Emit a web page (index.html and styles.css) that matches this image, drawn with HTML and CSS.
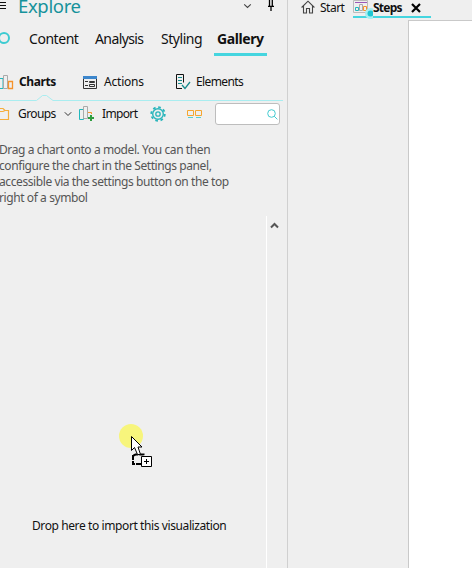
FILE: index.html
```html
<!DOCTYPE html>
<html lang="en">
<head>
<meta charset="utf-8">
<title>Explore</title>
<link rel="stylesheet" href="styles.css">
</head>
<body>
<div class="app">
  <aside class="panel">
    <header class="head">
      <svg class="menu" width="6" height="12" viewBox="0 0 6 12"><path d="M0 2.500h6M0 5.500h6M0 8.500h6" stroke="#111" fill="none"/></svg>
      <h1 class="title">Explore</h1>
      <svg class="head-chev" width="9" height="12" viewBox="0 0 9 12"><path d="M1.200 4.300l3.300 3.200 3.300-3.200" stroke="#444" stroke-width="1.100" fill="none"/></svg>
      <svg class="pin" width="8" height="12" viewBox="0 0 8 12"><path d="M2.500 0v6M5.300 0v6M1 6.300h6M4 6v5" stroke="#000" stroke-width="1.300" fill="none"/></svg>
    </header>
    <nav class="tabs">
      <svg class="ring" width="10" height="14" viewBox="0 0 10 14"><circle cx="4" cy="7" r="5" fill="none" stroke="#3dcbd1" stroke-width="2"/></svg>
      <a class="tab content">Content</a>
      <a class="tab analysis">Analysis</a>
      <a class="tab styling">Styling</a>
      <a class="tab gallery">Gallery</a>
    </nav>
    <nav class="subtabs">
      <svg class="i-charts" width="14" height="16" viewBox="0 0 14 16" fill="none"><path d="M-1 4.500h4v10h-4z" stroke="#22b8bd"/><path d="M3.500 1.500h4v13h-4z" stroke="#aaa"/><path d="M8.500 7.500h4v7h-4z" stroke="#f5932b" stroke-width="1.300"/></svg>
      <a class="sub charts">Charts</a>
      <svg class="i-actions" width="14" height="13" viewBox="0 0 14 13" fill="none"><path d="M.5.500h13v12H.5z" stroke="#333"/><path d="M0 0h14v3H0z" fill="#3d87cc"/><path d="M2 5.500h3M2 9.500h3M6.500 5.500h5v1h-5zM6.500 8.500h5v2h-5z" stroke="#333"/></svg>
      <a class="sub actions">Actions</a>
      <svg class="i-elements" width="15" height="16" viewBox="0 0 15 16" fill="none"><path d="M6 14.500H.5V.5h7v8" stroke="#111"/><path d="M2 3.500h4M2 6.500h4M2 9.500h4" stroke="#168a8c"/><path d="M6 11l3 3.500L14 8" stroke="#168a8c" stroke-width="1.300"/></svg>
      <a class="sub elements">Elements</a>
    </nav>
    <svg class="divider" width="287" height="8" viewBox="0 0 287 8"><path d="M0 6.500h36.500L42.500 1.500h4L53 6.500h230" stroke="#a9edf0" fill="none"/></svg>
    <div class="toolbar">
      <svg class="i-folder" width="10" height="14" viewBox="0 0 10 14"><path d="M-1 1.500h4l2 2h3.500v9H-1M0 4.500h3l2-1" stroke="#f5ae3c" stroke-width="1.200" fill="none"/></svg>
      <span class="tool groups">Groups</span>
      <svg class="g-chev" width="8" height="8" viewBox="0 0 8 8"><path d="M.8 2.300L4 5.500l3.200-3.200" stroke="#333" fill="none"/></svg>
      <svg class="i-import" width="16" height="16" viewBox="0 0 16 16" fill="none"><path d="M.5 3.500h4v10h-4z" stroke="#22b8bd"/><path d="M4.500.500h4v12h-4z" stroke="#aaa"/><path d="M9 6.500h3.500V8" stroke="#f5932b"/><path d="M12 9v6M9 12h6" stroke="#2f9e40" stroke-width="2"/></svg>
      <span class="tool import">Import</span>
      <svg class="i-gear" width="16" height="16" viewBox="0 0 16 16" fill="none" stroke="#29b5bb"><circle cx="8" cy="8" r="6.800" stroke-width="1.800" stroke-dasharray="2.670 2.670"/><circle cx="8" cy="8" r="5.300" stroke-width="1.400"/><circle cx="8" cy="8" r="2.200" stroke-width="1.300"/></svg>
      <svg class="i-pair" width="15" height="9" viewBox="0 0 15 9" fill="none"><path d="M.5.500h6v5h-6zM8.500.500h6v5h-6z" stroke="#f5a62f"/><path d="M1 7.500h5M9 7.500h5" stroke="#57cfd2"/></svg>
      <label class="search"><svg width="11" height="11" viewBox="0 0 11 11" fill="none" stroke="#43cbd1"><circle cx="4.500" cy="4.500" r="3.800"/><path d="M7.200 7.200l3.200 3.200"/></svg></label>
    </div>
    <p class="desc">Drag a chart onto a model. You can then<br>configure the chart in the Settings panel,<br>accessible via the settings button on the top<br>right of a symbol</p>
    <div class="gallery-body">
      <div class="drop">Drop here to import this visualization</div>
      <div class="scroll"><svg width="9" height="7" viewBox="0 0 9 7"><path d="M1 5.500l3.500-3.500L8 5.500" stroke="#555" stroke-width="2" fill="none"/></svg></div>
    </div>
  </aside>
  <main class="work">
    <nav class="docs">
      <svg class="home" width="14" height="14" viewBox="0 0 14 14" fill="none" stroke="#444" stroke-width="1.100"><path d="M.6 7.500L7 1.200l6.400 6.300M2.500 6v7h3V8.500h3V13h3V6"/></svg>
      <a class="doc start">Start</a>
      <div class="current">
        <svg class="i-steps" width="20" height="20" viewBox="0 0 20 20" fill="none"><path d="M.5.500h14v12H.5z" stroke="#bbb"/><path d="M2 2.500h12" stroke="#9b59b6"/><path d="M2.500 7.500h3v3h-3z" stroke="#22b8bd"/><path d="M6.500 4.500h3v6h-3z" stroke="#aaa"/><path d="M10.500 6.500h3v4h-3z" stroke="#f5932b"/><circle cx="17.500" cy="13.500" r="5.500" fill="#a6eef2"/><circle cx="17.500" cy="13.500" r="3" fill="#1fc6d2"/></svg>
        <a class="doc steps">Steps</a>
        <svg class="close" width="10" height="10" viewBox="0 0 10 10"><path d="M1 1l8 8M9 1L1 9" stroke="#000" stroke-width="2.200"/></svg>
      </div>
    </nav>
    <section class="canvas"></section>
  </main>
  <svg class="pointer" width="38" height="46" viewBox="0 0 38 46"><circle cx="12" cy="12" r="12" fill="#f7f57c"/><path d="M14.500 31.500l2-1h8v3M14 31v9h9" fill="none" stroke="#000" stroke-width="2" stroke-dasharray="5 1"/><path d="M12.500 12.500v14l3-3 3 7h3l-2.500-7.500h4z" fill="#fff" stroke="#000"/><path d="M22.500 32.500h10v10h-10z" fill="#fff" stroke="#000"/><path d="M25 37.500h5M27.500 35v5" stroke="#000"/></svg>
</div>
</body>
</html>
```
FILE: styles.css
```css
* { box-sizing: border-box; }
body { margin: 0; background: #efefef; font-family: "Noto Sans", "Open Sans", sans-serif; color: #111; font-size: 12px; }
svg { flex: none; display: block; }
.app { position: relative; display: flex; width: 472px; height: 568px; overflow: hidden; }
.panel { width: 288px; height: 568px; border-right: 1px solid #d0d0d0; display: flex; flex-direction: column; }
.head { height: 20px; display: flex; align-items: flex-start; }
.title { margin: -8px 0 0 12px; width: 70px; font-size: 18.500px; line-height: 27px; font-weight: 400; color: #16929b; letter-spacing: -.35px; }
.head-chev { margin-left: 155px; }
.pin { margin-left: 15px; }
.tabs { height: 38px; display: flex; align-items: flex-start; white-space: nowrap; }
.ring { margin-top: 11px; }
.tab { height: 36px; line-height: 38px; font-size: 14px; }
.content { margin-left: 19px; width: 66px; letter-spacing: -.45px; }
.analysis { width: 66px; letter-spacing: -.6px; }
.styling { width: 53px; letter-spacing: -.45px; }
.gallery { width: 53px; padding-left: 3px; font-weight: 700; letter-spacing: -.4px; border-bottom: 3px solid #45d5df; }
.subtabs { height: 36px; display: flex; align-items: center; padding-top: 12px; white-space: nowrap; }
.sub, .tool { line-height: 18px; letter-spacing: -.35px; }
.charts { margin-left: 5px; width: 64px; font-weight: 700; letter-spacing: -.4px; }
.actions { margin-left: 7px; width: 72px; letter-spacing: -.2px; }
.elements { margin-left: 5px; letter-spacing: -.6px; }
.divider { flex: none; }
.toolbar { height: 24px; display: flex; align-items: center; white-space: nowrap; }
.groups { margin-left: 8px; width: 46px; letter-spacing: -.6px; }
.i-import { margin-left: 7px; }
.import { margin-left: 7px; width: 48px; letter-spacing: -.65px; }
.i-pair { margin-left: 21px; }
.search { margin-left: 13px; width: 65px; height: 22px; background: #fff; border: 1px solid #bdbdbd; border-radius: 3px; display: flex; align-items: center; justify-content: flex-end; padding-right: 1px; }
.desc { margin: 16px 0 0 -1px; line-height: 16px; height: 64px; color: #555; white-space: nowrap; letter-spacing: -.41px; }
.gallery-body { display: flex; flex: 1; margin-top: 10px; }
.drop { width: 266px; padding: 302px 0 0 32px; white-space: nowrap; line-height: 16px; letter-spacing: -.4px; }
.scroll { width: 21px; border-left: 1px solid #fff; padding: 6px 0 0 3px; }
.work { width: 184px; display: flex; flex-direction: column; }
.docs { height: 20px; display: flex; align-items: flex-start; }
.home { margin-left: 13px; }
.doc { line-height: 16px; }
.start { margin-left: 5px; width: 33px; letter-spacing: -.5px; }
.current { width: 78px; height: 18px; border-bottom: 2px solid #45d5df; display: flex; }
.i-steps { margin-bottom: -4px; }
.steps { width: 38px; font-weight: 700; letter-spacing: -.75px; }
.close { margin-top: 3px; }
.canvas { margin-left: 120px; flex: 1; background: #fff; border: solid #c9c9c9; border-width: 1px 0 0 1px; }
.pointer { position: absolute; left: 119px; top: 424px; }
```
